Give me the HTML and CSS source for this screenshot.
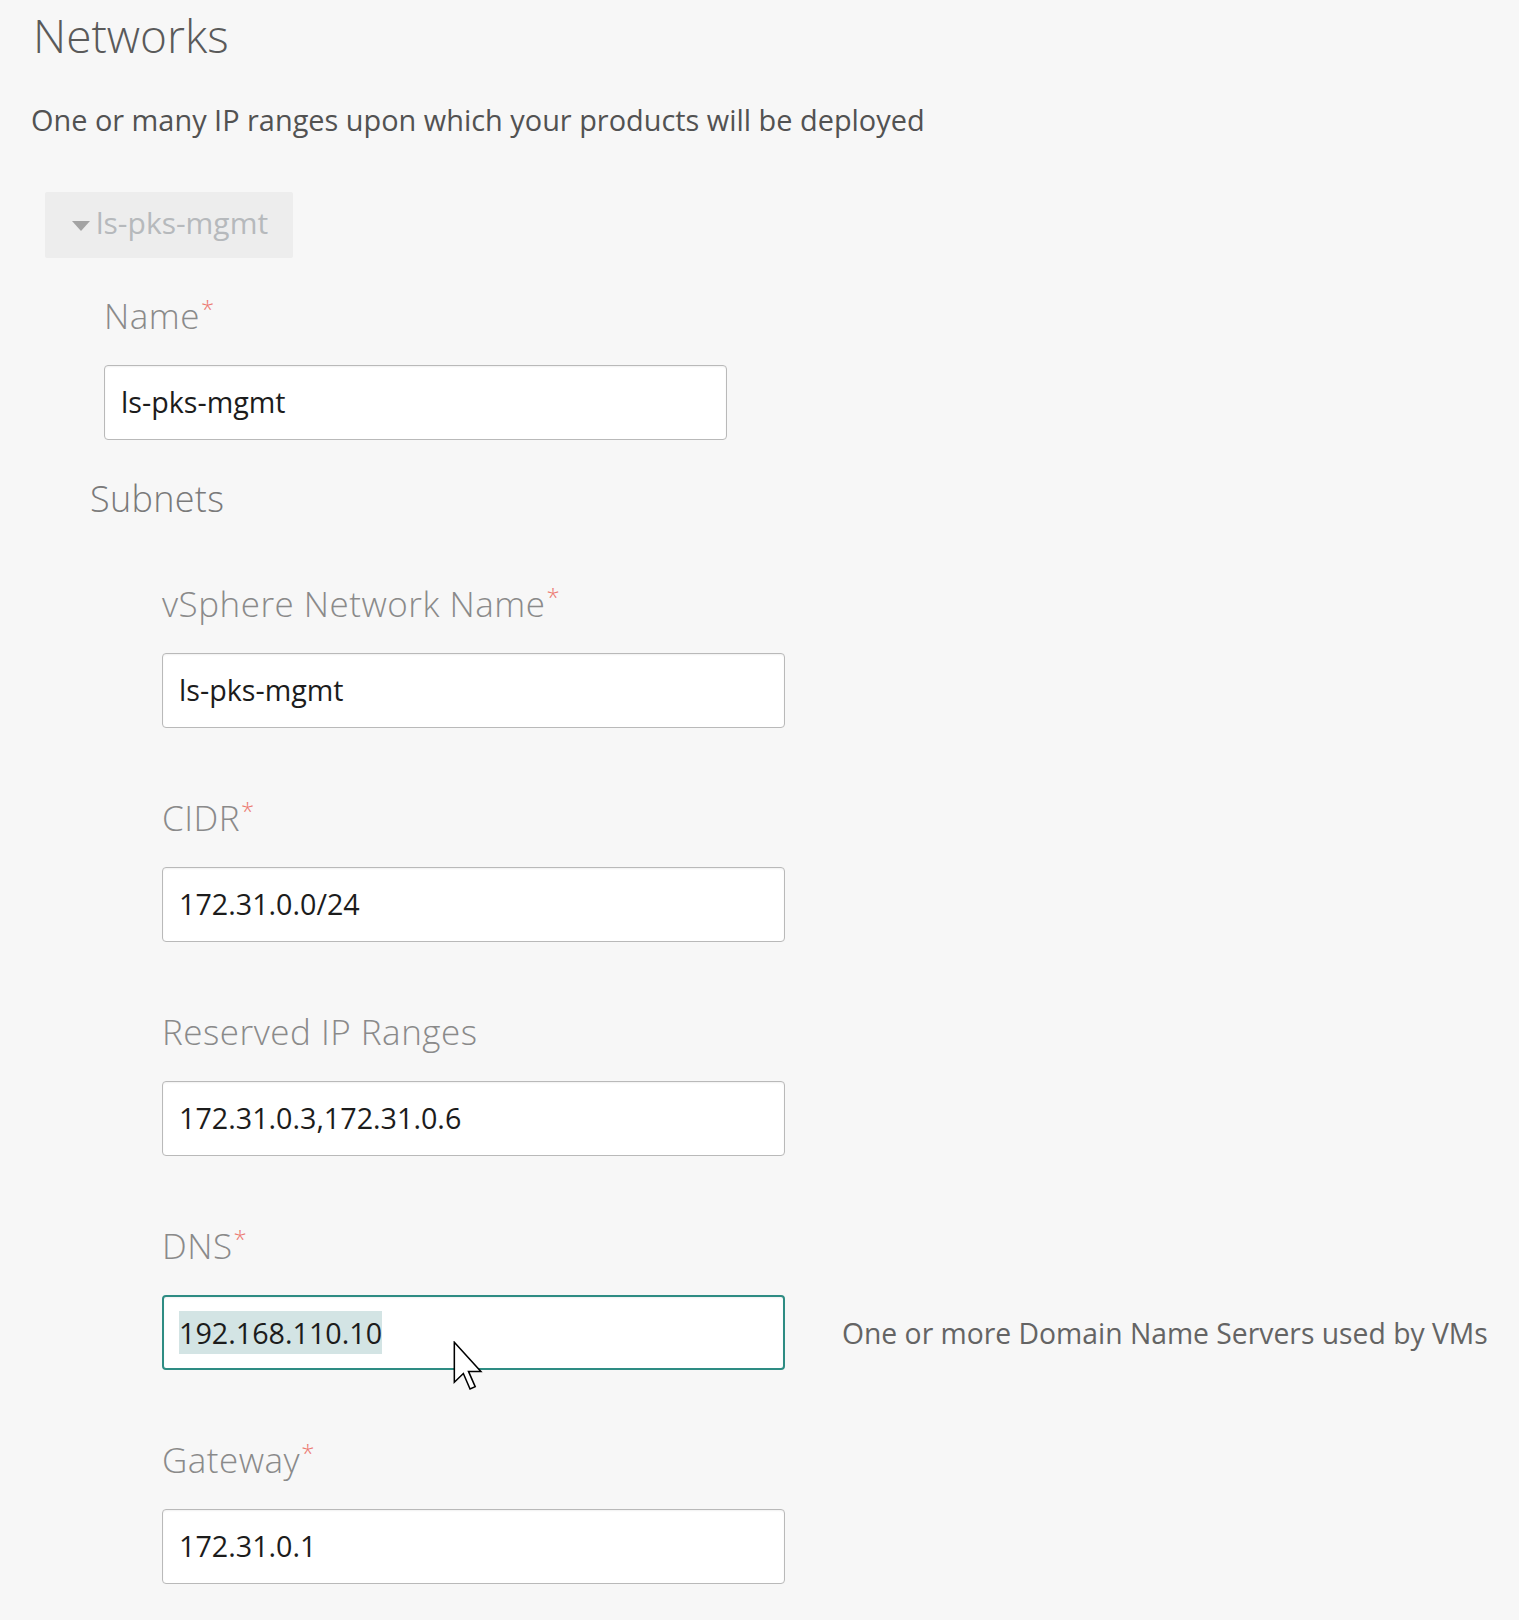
FILE: index.html
```html
<!DOCTYPE html>
<html lang="en">
<head>
<meta charset="utf-8">
<title>Networks</title>
<link rel="stylesheet" href="styles.css">
</head>
<body>
<main class="page">
  <h1 class="title">Networks</h1>
  <p class="subtitle">One or many IP ranges upon which your products will be deployed</p>

  <section class="network">
    <button class="toggle" type="button"><span class="caret"></span>ls-pks-mgmt</button>
    <div class="network-body">
      <div class="field name-field">
        <label class="label">Name<span class="req">*</span></label>
        <div class="input">ls-pks-mgmt</div>
      </div>

      <h2 class="subnets-heading">Subnets</h2>

      <div class="subnet">
        <div class="field">
          <label class="label">vSphere Network Name<span class="req">*</span></label>
          <div class="input">ls-pks-mgmt</div>
        </div>
        <div class="field">
          <label class="label">CIDR<span class="req">*</span></label>
          <div class="input">172.31.0.0/24</div>
        </div>
        <div class="field">
          <label class="label">Reserved IP Ranges</label>
          <div class="input">172.31.0.3,172.31.0.6</div>
        </div>
        <div class="field">
          <label class="label">DNS<span class="req">*</span></label>
          <div class="input-row">
            <div class="input input-focused"><span class="selected">192.168.110.10</span></div>
            <span class="hint">One or more Domain Name Servers used by VMs</span>
            <svg class="cursor" width="31" height="50" viewBox="0 0 12 19.4" aria-hidden="true">
              <path d="M0.5 0.5 L0.5 16 L4 12.6 L6.6 18.6 L8.6 17.7 L6 11.8 L10.8 11.8 Z" fill="#fff" stroke="#000" stroke-width="0.6" stroke-linejoin="miter"/>
            </svg>
          </div>
        </div>
        <div class="field">
          <label class="label">Gateway<span class="req">*</span></label>
          <div class="input">172.31.0.1</div>
        </div>
      </div>
    </div>
  </section>
</main>
</body>
</html>
```

FILE: styles.css
```css
* {
  box-sizing: border-box;
}

html, body {
  margin: 0;
  padding: 0;
  background: #f7f7f7;
}

body {
  font-family: "Open Sans", "Noto Sans", sans-serif;
  color: #555;
}

.page {
  padding-left: 33px;
  padding-bottom: 35px;
}

.title {
  margin: 7px 0 0;
  font-size: 46px;
  line-height: 56px;
  font-weight: 300;
  color: #5a5a5a;
}

.subtitle {
  margin: 39px 0 0 -2px;
  font-size: 28.9px;
  line-height: 36px;
  font-weight: 400;
  color: #525252;
}

.network {
  margin-top: 54px;
}

.toggle {
  display: flex;
  align-items: center;
  margin-left: 12px;
  width: 248px;
  height: 66px;
  padding: 0 0 5px 27px;
  border: 0;
  border-radius: 2px;
  background: #ededed;
  font-family: inherit;
  font-size: 30px;
  line-height: 61px;
  color: #b6b9bc;
  text-align: left;
}

.caret {
  width: 0;
  height: 0;
  margin: 6px 6px 0 0;
  border-left: 9px solid transparent;
  border-right: 9px solid transparent;
  border-top: 10px solid #a3a3a3;
}

.network-body {
  padding-top: 38px;
  padding-left: 57px;
}

.field {
  display: flex;
  flex-direction: column;
  align-items: flex-start;
}

.name-field {
  margin-left: 14px;
}

.label {
  font-size: 35px;
  line-height: 40px;
  font-weight: 300;
  letter-spacing: 0.5px;
  color: #8a8a8a;
  margin-bottom: 29px;
}

.req {
  font-size: 24px;
  line-height: 1;
  vertical-align: top;
  color: #ec7a72;
  margin-left: 1px;
  position: relative;
  top: 1px;
}

.input {
  width: 623px;
  height: 75px;
  padding: 0 0 0 16px;
  border: 1px solid #b9b9b9;
  border-radius: 4px;
  background: #fff;
  box-shadow: inset 0 1px 2px rgba(0, 0, 0, 0.06);
  font-size: 28.7px;
  line-height: 71px;
  color: #1c1c1c;
  white-space: nowrap;
}

.input-focused {
  border: 2px solid #2e8c83;
  padding-left: 15px;
}

.selected {
  background: #d3e4e4;
  padding: 2px 0;
}

.subnets-heading {
  margin: 38px 0 0;
  font-size: 36px;
  line-height: 42px;
  font-weight: 300;
  letter-spacing: 0.3px;
  color: #7a7a7a;
}

.subnet {
  margin-top: 64px;
  padding-left: 72px;
  display: flex;
  flex-direction: column;
  gap: 70px;
}

.input-row {
  position: relative;
  display: flex;
  align-items: center;
  gap: 57px;
}

.hint {
  font-size: 28.3px;
  line-height: 36px;
  color: #646464;
  white-space: nowrap;
}

.cursor {
  position: absolute;
  left: 291px;
  top: 46px;
}
```
